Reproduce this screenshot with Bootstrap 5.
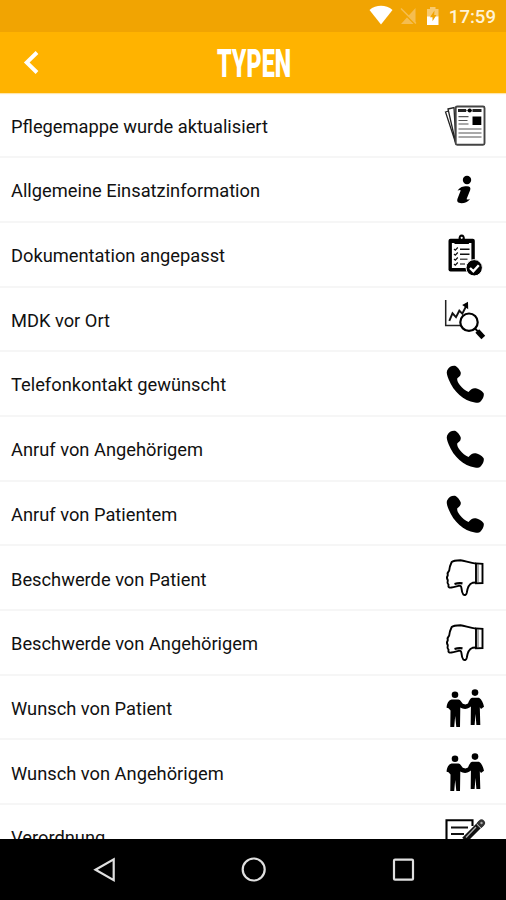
<!DOCTYPE html>
<html lang="de">
<head>
<meta charset="utf-8">
<meta name="viewport" content="width=device-width, initial-scale=1">
<title>Typen</title>
<link href="https://cdn.jsdelivr.net/npm/bootstrap@5.3.0/dist/css/bootstrap.min.css" rel="stylesheet">
<style>
body{font-family:Roboto,"Liberation Sans",sans-serif;color:#111}
.status{height:32px;background:#f1a402;padding-right:10px}
.clock{font-size:18.6px;font-weight:500;line-height:32px;color:#fff3d6;margin-left:9px;padding-top:1px}
.topbar{height:61px;background:#ffb300;box-shadow:0 1px 1px #ffb30055}
.title-text{font:900 38px Roboto,sans-serif}
.entries{min-height:0;padding-top:.6px}
.entry{height:64.7px;border-bottom:2px solid #f6f6f6;padding:1px 19px 0 11px;font-size:18.3px;flex:none;color:#111}
.entry span{padding-top:2px}
.entry svg{width:44px;height:44px}
.softkeys{height:61px}
</style>
</head>
<body class="vh-100 overflow-hidden d-flex flex-column bg-white">
<svg class="d-none">
  <symbol id="news" viewBox="0 0 44 44">
    <g fill="#fff" stroke="#222" stroke-width="1.3"><path d="M2.5 9 7 7.500 13 41Z"/><path d="M5 6 11 4.500 13 41Z"/><rect x="12.700" y="3.500" width="28.800" height="38.300" rx="1.500" stroke="#444" stroke-width="1.900"/></g>
    <path d="M15 7.500h8M29.500 7.500h9" stroke="#222" stroke-width="2.800"/><path d="M23 7.500h7" stroke="#777" stroke-width="1.500"/><circle cx="26.700" cy="7.500" r="2" fill="#000"/>
    <path d="M15.500 13.700h10M15.500 17.500h9M15.500 21h10M15.500 26h23M15.500 30h23M15.500 34h23" stroke="#555" stroke-width="1.200"/><path d="M29.500 13.500h8.800v8.500h-8.800z"/>
  </symbol>
  <symbol id="info" viewBox="0 0 44 44"><circle cx="24" cy="12" r="4.200"/><path d="M14.600 22.500C17 18.800 20.500 18.100 24 18.200c3 .1 3.900 1.600 3.200 3.700L23.800 30.500c-.4 1.500.5 1.400 3.400.2C24.500 34.200 22 35.200 18.500 35.200c-3.700 0-4.900-1.700-4-4.400l3-7.800c.3-1.300-.5-1.300-2.900-.5Z"/></symbol>
  <symbol id="check" viewBox="0 0 44 44">
    <rect x="5.500" y="5.700" width="26.300" height="32.800" rx="2"/><path fill="#fff" d="M8.900 10h19.500v25H8.900z"/><path d="M11.500 11V7.500l4-1c0-3 1-4.900 3.200-4.900s3.200 1.900 3.200 4.900l4 1V11Z"/><circle cx="18.700" cy="4.800" r="1.100" fill="#fff"/>
    <g fill="none" stroke="#111" stroke-width="1.500"><path d="M17 16.300h9.500M17 21.300h9.500"/><path d="M17 26.200h7.500M17 31h5" stroke="#555"/><path d="m11 16 1.300 1.200 2.500-2.700M11 21l1.300 1.200 2.500-2.700M11 26l1.300 1.200 2.500-2.700M11 31l1.300 1.200 2.500-2.700" stroke-width="1.200"/></g>
    <circle cx="31.200" cy="34.800" r="8.200" stroke="#fff" stroke-width="1"/><path d="m27 35 3.300 3.200 5.500-6" fill="none" stroke="#fff" stroke-width="2.400"/>
  </symbol>
  <symbol id="chart" viewBox="0 0 44 44">
    <path d="M2.700 2v25.600H18" fill="none" stroke="#222" stroke-width="1.500"/><path d="m6.300 22.800 3.200-7.500 3.500 3.900 3.300-6.500 3 3L23.200 8" fill="none" stroke="#111" stroke-width="1.900"/><path d="m25 3.800.2 7.500-6-4.200Z"/>
    <circle cx="26" cy="24.200" r="8.700" fill="#fff" stroke="#000" stroke-width="2.200"/><path d="m32 30.500 3 3" stroke="#000" stroke-width="1.800"/><path d="m34.300 33 6 6.500" stroke="#000" stroke-width="5.200"/>
  </symbol>
  <symbol id="phone" viewBox="0 0 44 44"><path d="M4.200 8.200C6 4.800 9 3.300 12.600 3.900c1.600.8 4.400 3.800 5.100 6.400.5 2.200-.5 4.200-3.400 5.900-.4 2 .3 4 2.500 6.800 2.500 3.300 5.500 5.700 8.700 7.100 2.200-3 4.400-4.300 7.400-3.800 3 .6 5.700 2.300 7.600 4.700 1.100 2-.5 6.300-3.200 8.700-1.400 1.300-3.300 1.200-5.400.8C20.600 38.700 10.800 30 5.700 17.400 4.200 13.600 3.100 10.600 4.200 8.200Z"/></symbol>
  <symbol id="thumb" viewBox="0 0 44 44"><path fill="none" stroke="#000" stroke-width="1.900" stroke-linejoin="round" d="M33 7.600C27 7 22 4.800 17.500 4.200 14 4.300 10 4.800 8.700 6c-1.200 2.500-2.400 5.200-2.500 8.500-1.900 2-2 3-1.400 4.700-1.300 2-1.200 3.300 0 4.900-.7 2.300-.2 3.500.7 4.600-.5 2.500.8 3.300 3 2.800 2.300 0 4.500-1 7-1.700 2-.4 2.700.2 2.900 2 .3 3 .6 5 1.900 6.700 1.500 1.200 3.200.2 3.500-1.800.5-4 2-8.700 5.700-9.900L33 26.500"/><path d="M11.500 28c3-.9 5.500-1 8-.6" fill="none" stroke="#000" stroke-width="2.300"/><path d="m33 7.400 6.500.4V27L33 27.200Z" fill="#fff" stroke="#000" stroke-width="1.900"/><path d="M35 8v19" stroke="#555"/></symbol>
  <symbol id="people" viewBox="0 0 44 44">
    <circle cx="12" cy="8.700" r="3.300"/><circle cx="32" cy="6.600" r="3.300"/>
    <path d="M8.500 13.400h7c2 .3 3 2.900 4.300 4.400l2.700.8 2.500-1c1-2.800 2-5 4-5.800h7c2.700 1.400 4.300 5.300 5 9l-3 2.300-1.200-1.800.5 17.700h-3.900L32.500 28 31.600 39h-3.900l.2-18.500-1.400 1c-2.500 2-6.700 1.700-9.200 0l-.3 19.500h-3.700L12.200 30l-1 11H7.300l.2-16.500-2-2.300-1.900-.5C3.700 18 5.400 14.200 8.500 13.400Z"/>
  </symbol>
  <symbol id="note" viewBox="0 0 44 44"><path d="M29.500 11V5.200H3.500v34h26V27" fill="none" stroke="#000" stroke-width="2.100"/><path d="M8 12.500h17M8 19h13M8 26h12" stroke="#111" stroke-width="1.900"/><path d="m38.500 8-17 17" stroke="#111" stroke-width="6.500"/><path d="m38.500 8-1.200 1.200" stroke="#333" stroke-width="7" stroke-linecap="round"/><path d="m33 12-10 10.500" stroke="#aaa" stroke-width="1.300"/><path d="m33.500 8.800 4.500 4.400" stroke="#ddd" stroke-width=".9"/><circle cx="38.500" cy="8" r="1.200" fill="#aaa"/></symbol>
</svg>

<div class="status d-flex align-items-center justify-content-end flex-shrink-0">
  <svg width="74" height="32" viewBox="366 0 74 32">
    <path d="M369.500 10c6.500-5.600 16.500-5.600 23 0L381 24.500Z" fill="#fff"/>
    <path d="M415.500 8v16H401Z" fill="#f5bd50"/><path d="m401.500 10.500 14 14" stroke="#f1a402" stroke-width="2"/><path d="m401 8.500 15 15" stroke="#f5bd50" stroke-width="1.500"/>
    <path d="M427 9h3V7h5.500v2h3v8H427Z" fill="#f8ca70"/><path d="M427 16.500h11.500v8.500H427z" fill="#fff"/><path d="m434.500 10.500-4.500 6.800h2.500v4l4-6.300h-2.300Z" fill="#f1a402"/>
  </svg>
  <span class="clock">17:59</span>
</div>
<header class="topbar flex-shrink-0">
  <svg class="d-block" width="506" height="61" viewBox="0 32 506 61">
    <path d="m37 52.500-10.300 10L37 72.500" fill="none" stroke="#fff" stroke-width="3.900"/>
    <text class="title-text" x="217" y="76.500" fill="#fff" textLength="74" lengthAdjust="spacingAndGlyphs">TYPEN</text>
  </svg>
</header>
<main class="entries flex-grow-1 overflow-hidden d-flex flex-column">
  <div class="entry d-flex align-items-center justify-content-between"><span>Pflegemappe wurde aktualisiert</span><svg><use href="#news"/></svg></div>
  <div class="entry d-flex align-items-center justify-content-between"><span>Allgemeine Einsatzinformation</span><svg><use href="#info"/></svg></div>
  <div class="entry d-flex align-items-center justify-content-between"><span>Dokumentation angepasst</span><svg><use href="#check"/></svg></div>
  <div class="entry d-flex align-items-center justify-content-between"><span>MDK vor Ort</span><svg><use href="#chart"/></svg></div>
  <div class="entry d-flex align-items-center justify-content-between"><span>Telefonkontakt gewünscht</span><svg><use href="#phone"/></svg></div>
  <div class="entry d-flex align-items-center justify-content-between"><span>Anruf von Angehörigem</span><svg><use href="#phone"/></svg></div>
  <div class="entry d-flex align-items-center justify-content-between"><span>Anruf von Patientem</span><svg><use href="#phone"/></svg></div>
  <div class="entry d-flex align-items-center justify-content-between"><span>Beschwerde von Patient</span><svg><use href="#thumb"/></svg></div>
  <div class="entry d-flex align-items-center justify-content-between"><span>Beschwerde von Angehörigem</span><svg><use href="#thumb"/></svg></div>
  <div class="entry d-flex align-items-center justify-content-between"><span>Wunsch von Patient</span><svg><use href="#people"/></svg></div>
  <div class="entry d-flex align-items-center justify-content-between"><span>Wunsch von Angehörigem</span><svg><use href="#people"/></svg></div>
  <div class="entry d-flex align-items-center justify-content-between"><span>Verordnung</span><svg><use href="#note"/></svg></div>
</main>
<footer class="softkeys bg-black flex-shrink-0">
  <svg class="d-block" width="506" height="61" viewBox="0 839 506 61" fill="none" stroke="#e0e0e0" stroke-width="2.200">
    <path d="m95.500 869.700 18.200-10.400v20.800Z"/><circle cx="253.700" cy="869.500" r="11"/><rect x="394" y="859.700" width="19" height="20" rx="1"/>
  </svg>
</footer>
<script src="https://cdn.jsdelivr.net/npm/bootstrap@5.3.0/dist/js/bootstrap.bundle.min.js"></script>
</body>
</html>
